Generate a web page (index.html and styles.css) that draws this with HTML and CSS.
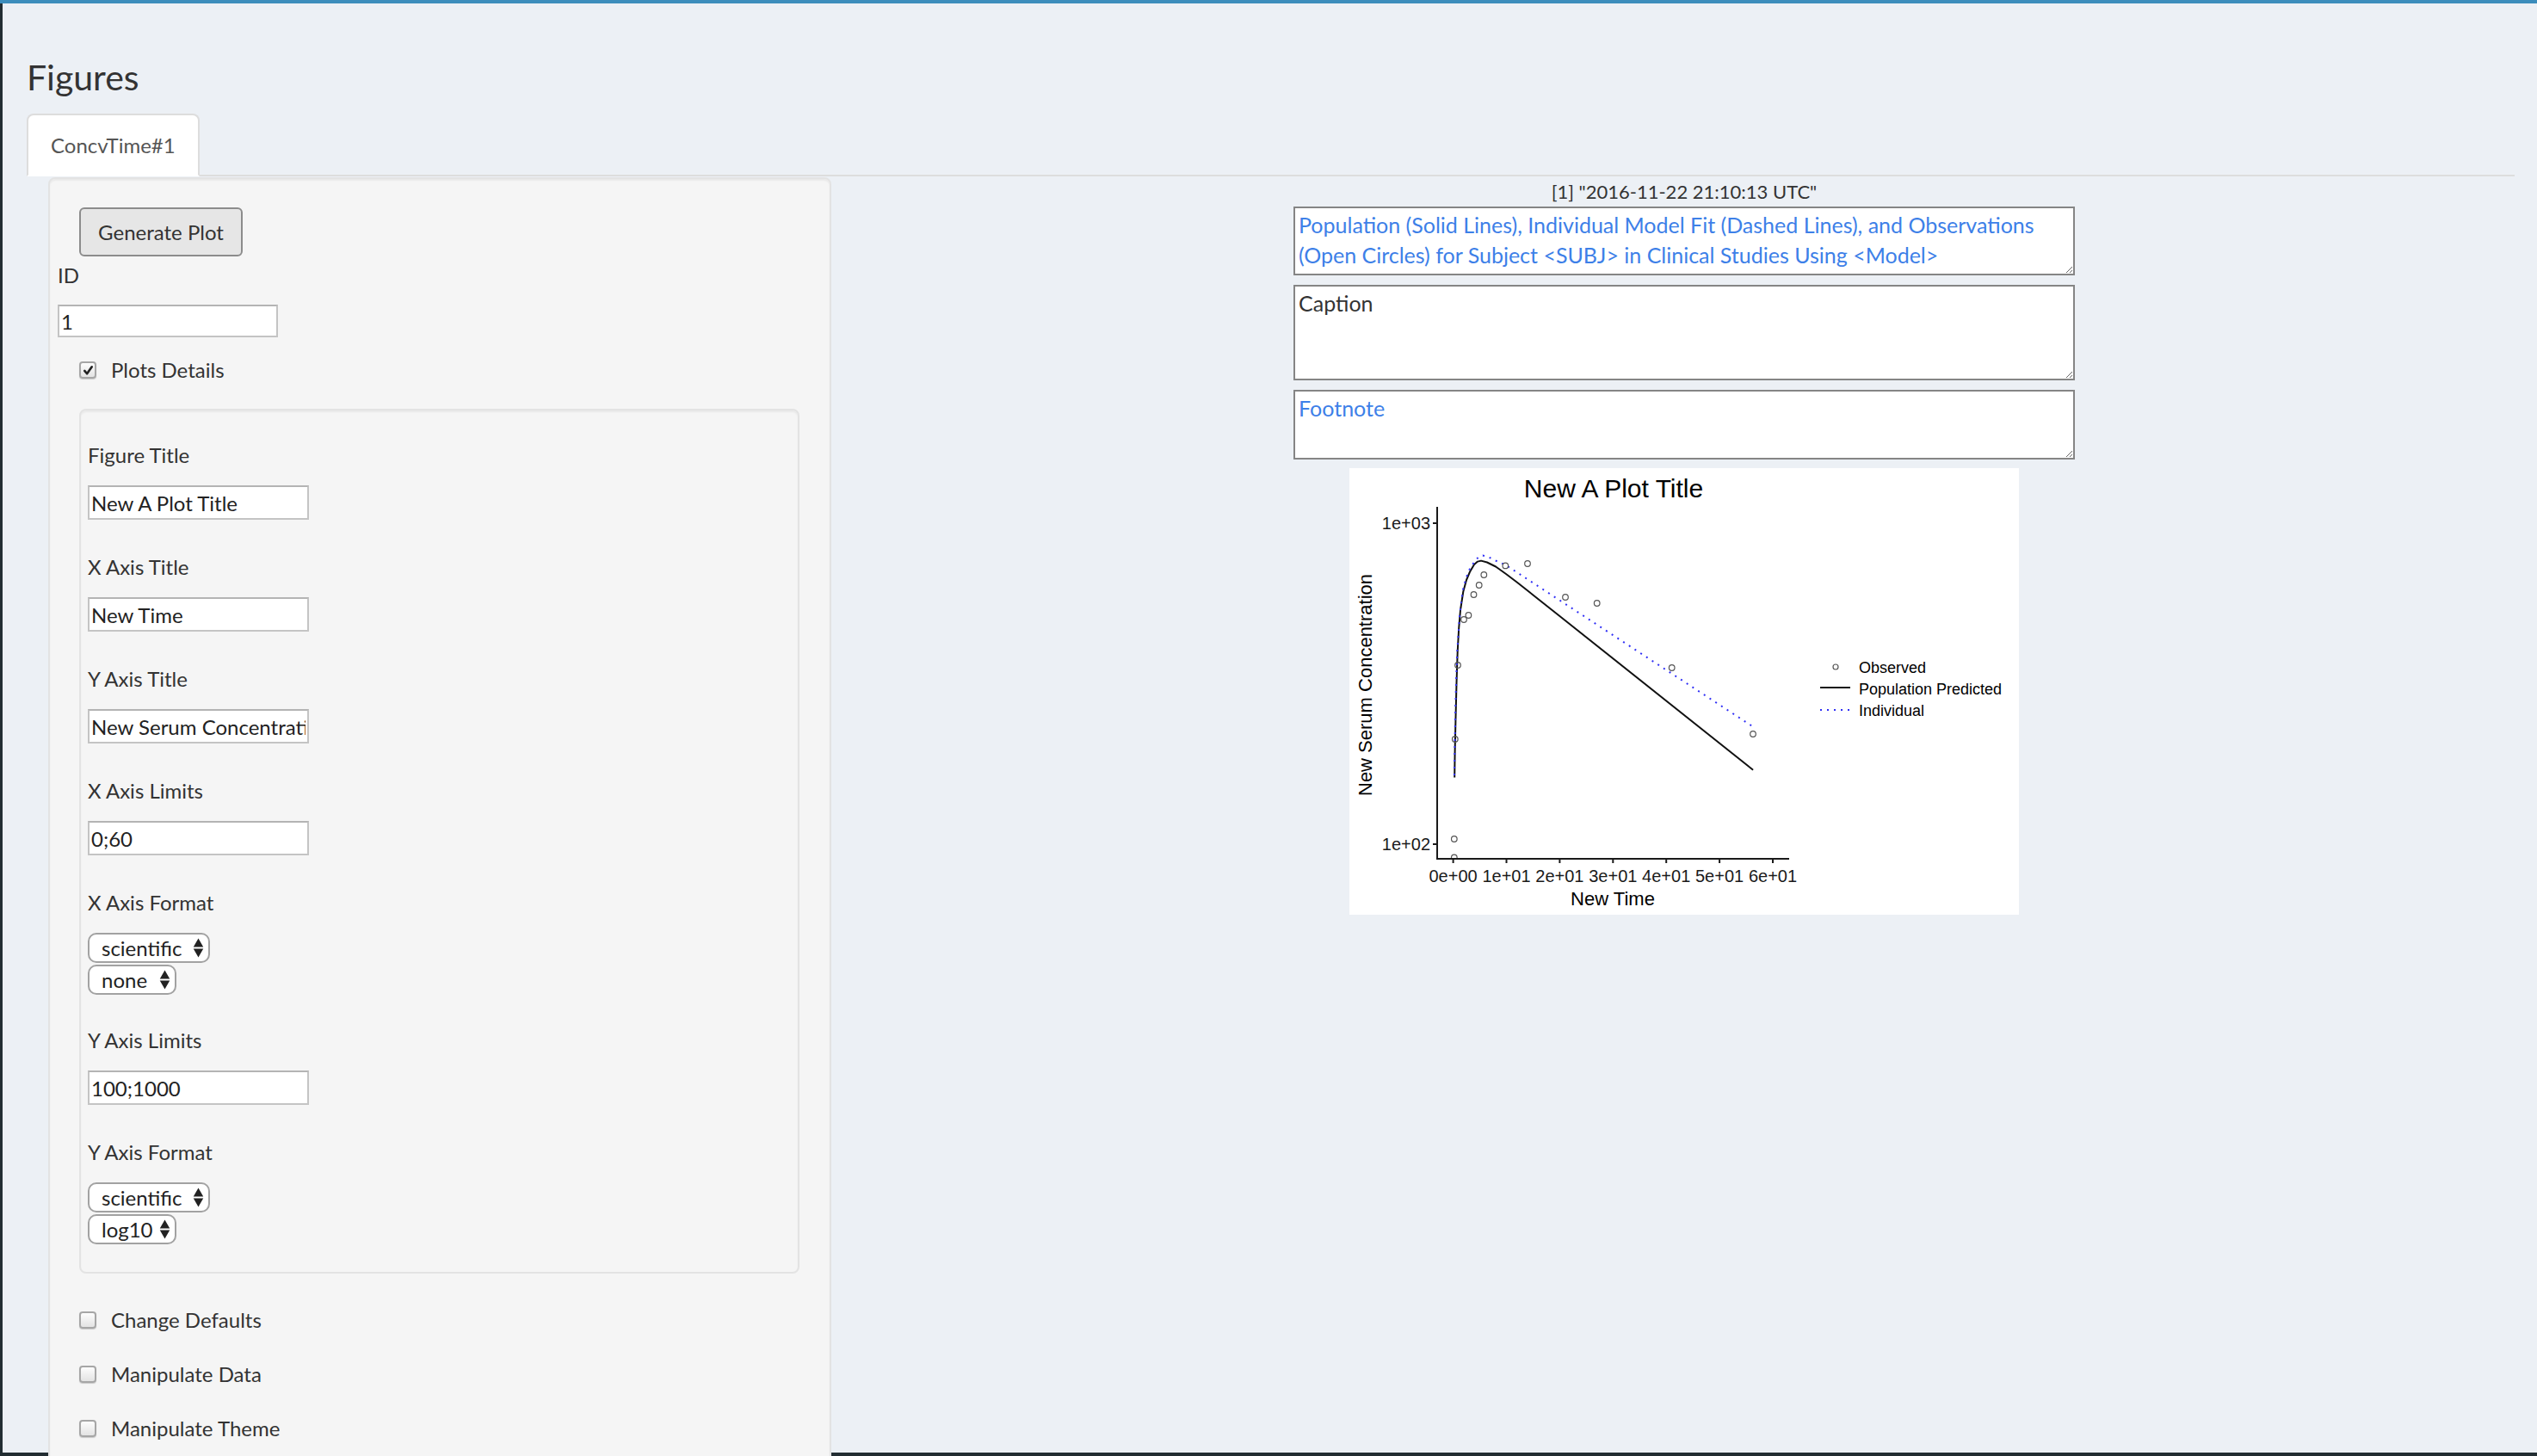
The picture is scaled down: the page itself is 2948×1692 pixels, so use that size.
FILE: index.html
```html
<!DOCTYPE html>
<html lang="en">
<head>
<meta charset="utf-8">
<title>Figures</title>
<link rel="stylesheet" href="styles.css">
</head>
<body>
<div class="topbar"></div>
<main class="content">
  <h3 class="page-title">Figures</h3>
  <ul class="tabs">
    <li class="tab active">ConcvTime#1</li>
  </ul>
  <div class="tab-pane">
    <aside class="sidebar">
      <button class="btn" type="button">Generate Plot</button>
      <div class="id-field">
        <label class="lbl" for="subj-id">ID</label>
        <input id="subj-id" class="txt txt-id" type="text" value="1">
      </div>
      <label class="check check-first"><span class="box"><svg class="tick" viewBox="0 0 16 16"><path d="M3.5 8.5 L6.5 12 L12.5 3.5"/></svg></span>Plots Details</label>
      <div class="well">
        <div class="field"><label class="lbl">Figure Title</label><input class="txt" type="text" value="New A Plot Title"></div>
        <div class="field"><label class="lbl">X Axis Title</label><input class="txt" type="text" value="New Time"></div>
        <div class="field"><label class="lbl">Y Axis Title</label><input class="txt" type="text" value="New Serum Concentration"></div>
        <div class="field"><label class="lbl">X Axis Limits</label><input class="txt" type="text" value="0;60"></div>
        <div class="field field-format"><label class="lbl">X Axis Format</label>
          <span class="sel sel-wide"><select><option>scientific</option><option>comma</option></select><svg class="arrows" viewBox="0 0 12 22"><path d="M0.5 10 L6 0.5 L11.5 10 Z M0.5 12 L6 21.5 L11.5 12 Z"/></svg></span>
          <span class="sel sel-narrow"><select><option>none</option><option>log10</option></select><svg class="arrows" viewBox="0 0 12 22"><path d="M0.5 10 L6 0.5 L11.5 10 Z M0.5 12 L6 21.5 L11.5 12 Z"/></svg></span>
        </div>
        <div class="field"><label class="lbl">Y Axis Limits</label><input class="txt" type="text" value="100;1000"></div>
        <div class="field field-format"><label class="lbl">Y Axis Format</label>
          <span class="sel sel-wide"><select><option>scientific</option><option>comma</option></select><svg class="arrows" viewBox="0 0 12 22"><path d="M0.5 10 L6 0.5 L11.5 10 Z M0.5 12 L6 21.5 L11.5 12 Z"/></svg></span>
          <span class="sel sel-narrow"><select><option>log10</option><option>none</option></select><svg class="arrows" viewBox="0 0 12 22"><path d="M0.5 10 L6 0.5 L11.5 10 Z M0.5 12 L6 21.5 L11.5 12 Z"/></svg></span>
        </div>
      </div>
      <label class="check check-after"><span class="box"></span>Change Defaults</label>
      <label class="check check-next"><span class="box"></span>Manipulate Data</label>
      <label class="check check-next"><span class="box"></span>Manipulate Theme</label>
    </aside>
    <section class="main-panel">
      <div class="stamp">[1] "2016-11-22 21:10:13 UTC"</div>
      <textarea class="ta ta-title blue">Population (Solid Lines), Individual Model Fit (Dashed Lines), and Observations (Open Circles) for Subject &lt;SUBJ&gt; in Clinical Studies Using &lt;Model&gt;</textarea>
      <textarea class="ta ta-caption">Caption</textarea>
      <textarea class="ta ta-foot blue">Footnote</textarea>
      <svg class="plot" viewBox="0 0 778 519" width="778" height="519">
        <defs>
          <clipPath id="panel"><rect x="102" y="45" width="409" height="409"/></clipPath>
        </defs>
        <rect class="plot-bg" x="0" y="0" width="778" height="519"/>
        <text class="p-title" x="307" y="34" text-anchor="middle">New A Plot Title</text>
        <g clip-path="url(#panel)">
          <path class="pop" d="M122.2,359.5 L122.6,330 L123.5,290 L124.5,250 L125.7,213.5 L127.2,186 L129,165 L132.3,143.5 L136,130 L140,120.5 L145,112 L149,108.6 L153,107.6 L160,109.5 L170.1,114.5 L182,123 L194.9,132.7 L244.4,171.95 L469.1,350.8"/>
          <path class="ind" d="M122,357 L122.5,320 L123.3,275 L124.3,240 L125.3,213 L128.2,170 L131.8,142 L135.5,128 L139.5,118 L145.6,108 L150,103.5 L155,101.5 L162,103.5 L170,107.5 L181.8,112.7 L469,300.5"/>
          <g class="obs">
            <circle cx="121.8" cy="452.5" r="3.3"/>
            <circle cx="121.8" cy="431" r="3.3"/>
            <circle cx="122.8" cy="315" r="3.3"/>
            <circle cx="126" cy="229" r="3.3"/>
            <circle cx="133" cy="176" r="3.3"/>
            <circle cx="138.4" cy="171" r="3.3"/>
            <circle cx="144.5" cy="147" r="3.3"/>
            <circle cx="150.7" cy="136" r="3.3"/>
            <circle cx="156.3" cy="124" r="3.3"/>
            <circle cx="181.3" cy="113.4" r="3.3"/>
            <circle cx="207" cy="111" r="3.3"/>
            <circle cx="251" cy="150" r="3.3"/>
            <circle cx="287.7" cy="157" r="3.3"/>
            <circle cx="374.7" cy="232" r="3.3"/>
            <circle cx="469" cy="309" r="3.3"/>
          </g>
        </g>
        <g class="axis">
          <line x1="102" y1="45" x2="102" y2="455"/>
          <line x1="101" y1="454" x2="511" y2="454"/>
          <line x1="97" y1="64" x2="102" y2="64"/>
          <line x1="97" y1="437" x2="102" y2="437"/>
          <line x1="120.6" y1="454" x2="120.6" y2="459"/>
          <line x1="182.5" y1="454" x2="182.5" y2="459"/>
          <line x1="244.4" y1="454" x2="244.4" y2="459"/>
          <line x1="306.3" y1="454" x2="306.3" y2="459"/>
          <line x1="368.2" y1="454" x2="368.2" y2="459"/>
          <line x1="430.1" y1="454" x2="430.1" y2="459"/>
          <line x1="492" y1="454" x2="492" y2="459"/>
        </g>
        <g class="ticklab">
          <text x="94" y="71" text-anchor="end">1e+03</text>
          <text x="94" y="444" text-anchor="end">1e+02</text>
          <text x="120.6" y="481" text-anchor="middle">0e+00</text>
          <text x="182.5" y="481" text-anchor="middle">1e+01</text>
          <text x="244.4" y="481" text-anchor="middle">2e+01</text>
          <text x="306.3" y="481" text-anchor="middle">3e+01</text>
          <text x="368.2" y="481" text-anchor="middle">4e+01</text>
          <text x="430.1" y="481" text-anchor="middle">5e+01</text>
          <text x="492" y="481" text-anchor="middle">6e+01</text>
        </g>
        <text class="axtitle" x="306" y="508" text-anchor="middle">New Time</text>
        <text class="axtitle" transform="translate(26 252) rotate(-90)" text-anchor="middle">New Serum Concentration</text>
        <g class="legend">
          <circle class="leg-obs" cx="565" cy="231" r="3"/>
          <line class="pop" x1="547" y1="255" x2="582" y2="255"/>
          <line class="ind" x1="547" y1="281" x2="583" y2="281"/>
          <text x="592" y="238">Observed</text>
          <text x="592" y="263">Population Predicted</text>
          <text x="592" y="288">Individual</text>
        </g>
      </svg>
    </section>
  </div>
</main>
</body>
</html>
```

FILE: styles.css
```css
html, body {
  margin: 0;
  height: 100%;
  overflow: hidden;
}

body {
  background: #222d32;
  font-family: Lato, "Open Sans", "Liberation Sans", sans-serif;
  color: #333;
}

.topbar {
  height: 4px;
  background: #3c8dbc;
}

.content {
  display: flow-root;
  box-sizing: border-box;
  height: 1688px;
  border-left: 3px solid #222d32;
  border-bottom: 4px solid #222d32;
  background: #ecf0f5;
  padding: 0 26px 0 28px;
}

.page-title {
  margin: 62px 0 18px;
  font-size: 41px;
  line-height: 48px;
  font-weight: 400;
  color: #333;
}

.tabs {
  list-style: none;
  margin: 0;
  padding: 0;
  display: flex;
  border-bottom: 2px solid #ddd;
}

.tab {
  margin-bottom: -2px;
  background: #fff;
  border: 2px solid #ddd;
  border-bottom-color: transparent;
  border-radius: 8px 8px 0 0;
  padding: 0 26px;
  line-height: 69px;
  font-size: 24px;
  color: #555;
}

.tab-pane {
  display: flex;
  align-items: flex-start;
}

/* ---------- sidebar ---------- */
.sidebar {
  box-sizing: border-box;
  flex: 0 0 910px;
  width: 910px;
  min-height: 1600px;
  margin: 1px 0 0 25px;
  padding: 33px 35px 0 34px;
  background: #f5f5f5;
  border: 2px solid #e3e3e3;
  border-radius: 8px;
  box-shadow: inset 0 2px 2px rgba(0, 0, 0, 0.05);
}

.btn {
  display: block;
  box-sizing: border-box;
  width: 190px;
  height: 57px;
  margin: 0;
  padding: 0;
  font-family: Lato, "Open Sans", sans-serif;
  font-size: 24px;
  color: #333;
  background: #e6e6e6;
  border: 2px solid #8c8c8c;
  border-radius: 6px;
}

.lbl {
  display: block;
  font-size: 24px;
  line-height: 34px;
  margin-bottom: 18px;
  color: #333;
}

.id-field {
  margin: 5px 0 0 -25px;
}

.id-field .lbl {
  margin-bottom: 17px;
}

.txt {
  display: block;
  box-sizing: border-box;
  width: 257px;
  height: 40px;
  margin: 0;
  padding: 0 2px;
  font-family: Lato, "Open Sans", sans-serif;
  font-size: 24px;
  color: #222;
  background: #fff;
  border: 2px solid #c4c4c4;
  border-top-color: #b4b4b4;
  border-radius: 0;
  outline: none;
}

.txt-id {
  width: 256px;
  height: 38px;
}

.check {
  display: flex;
  align-items: center;
  gap: 17px;
  font-size: 24px;
  line-height: 34px;
  color: #333;
}

.box {
  box-sizing: border-box;
  flex: 0 0 20px;
  width: 20px;
  height: 20px;
  border: 2px solid #a6a6a6;
  border-radius: 4px;
  background: linear-gradient(#fdfdfd, #e3e3e3);
  box-shadow: 0 1px 1px rgba(0, 0, 0, 0.18);
  display: flex;
  align-items: center;
  justify-content: center;
}

.tick {
  width: 15px;
  height: 15px;
  fill: none;
  stroke: #222;
  stroke-width: 2.8;
  stroke-linecap: round;
  stroke-linejoin: round;
}

.check-first {
  margin-top: 21px;
}

.check-after {
  margin-top: 37px;
}

.check-next {
  margin-top: 29px;
}

.well {
  box-sizing: border-box;
  margin-top: 28px;
  padding: 35px 8px 32px;
  background: #f5f5f5;
  border: 2px solid #e3e3e3;
  border-radius: 8px;
  box-shadow: inset 0 2px 2px rgba(0, 0, 0, 0.05);
}

.field {
  margin-bottom: 38px;
}

.field-format {
  margin-bottom: 36px;
}

.field:last-child {
  margin-bottom: 0;
}

.sel {
  position: relative;
  display: block;
  width: max-content;
}

.sel + .sel {
  margin-top: 2px;
}

.sel select {
  display: block;
  -webkit-appearance: none;
  appearance: none;
  box-sizing: border-box;
  height: 35px;
  margin: 0;
  padding: 0 0 0 14px;
  font-family: Lato, "Open Sans", sans-serif;
  font-size: 24px;
  color: #222;
  background: #fff;
  border: 2px solid #a2a2a2;
  border-radius: 10px;
  outline: none;
}

.sel-wide select {
  width: 142px;
}

.sel-narrow select {
  width: 103px;
}

.arrows {
  position: absolute;
  right: 7px;
  top: 6px;
  width: 13px;
  height: 23px;
  fill: #222;
  pointer-events: none;
}

/* ---------- main panel ---------- */
.main-panel {
  flex: 1;
  margin-left: 26px;
  padding-top: 1px;
  display: flex;
  flex-direction: column;
  align-items: center;
}

.stamp {
  font-size: 22px;
  line-height: 34px;
  color: #333;
}

.ta {
  display: block;
  box-sizing: border-box;
  width: 908px;
  margin: 0;
  padding: 2px 4px;
  font-family: Lato, "Open Sans", sans-serif;
  font-size: 25px;
  line-height: 35px;
  color: #333;
  background: #fff;
  border: 2px solid #858585;
  border-radius: 0;
  outline: none;
}

.ta-title {
  height: 80px;
}

.ta-caption {
  height: 111px;
  margin-top: 11px;
}

.ta-foot {
  height: 81px;
  margin-top: 11px;
}

.blue {
  color: #3d80e8;
}

.plot {
  display: block;
  margin-top: 10px;
  font-family: "Liberation Sans", Arial, sans-serif;
}

.plot-bg {
  fill: #fff;
}

.p-title {
  font-size: 30px;
  fill: #000;
}

.pop {
  fill: none;
  stroke: #111;
  stroke-width: 2;
  stroke-linejoin: round;
}

.ind {
  fill: none;
  stroke: #2f2ff5;
  stroke-width: 2;
  stroke-dasharray: 2 6;
}

.obs circle,
.leg-obs {
  fill: none;
  stroke: #555;
  stroke-width: 1.2;
}

.axis line {
  stroke: #1a1a1a;
  stroke-width: 2;
}

.ticklab text {
  font-size: 20px;
  fill: #1a1a1a;
}

.axtitle {
  font-size: 22px;
  fill: #000;
}

.legend text {
  font-size: 18px;
  fill: #000;
}
```
